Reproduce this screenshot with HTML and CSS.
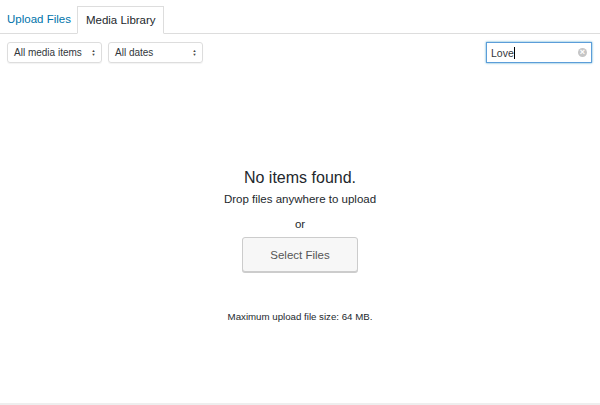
FILE: index.html
```html
<!DOCTYPE html>
<html>
<head>
<meta charset="utf-8">
<link rel="stylesheet" href="styles.css">
</head>
<body>
<div class="frame">
  <div class="tabs">
    <a class="tab link">Upload Files</a>
    <a class="tab active">Media Library</a>
  </div>
  <div class="toolbar">
    <div class="filters">
      <div class="select sel1"><span>All media items</span><span class="arrows">&#9650;&#9660;</span></div>
      <div class="select sel2"><span>All dates</span><span class="arrows">&#9650;&#9660;</span></div>
    </div>
    <div class="search"><span class="val">Love</span><span class="caret"></span><span class="clear">&#215;</span></div>
  </div>
  <div class="empty">
    <h2 class="title">No items found.</h2>
    <p class="drop">Drop files anywhere to upload</p>
    <p class="or">or</p>
    <button class="btn">Select Files</button>
    <p class="max">Maximum upload file size: 64 MB.</p>
  </div>
  <div class="bottom"></div>
</div>
</body>
</html>
```
FILE: styles.css
```css
html, body { margin: 0; padding: 0; background: #fff; }
body { font-family: "Liberation Sans", Arial, sans-serif; color: #23282d; width: 600px; height: 405px; overflow: hidden; }
.frame { display: flex; flex-direction: column; height: 405px; }
.tabs { display: flex; align-items: flex-end; height: 34px; border-bottom: 1px solid #ddd; box-sizing: border-box; }
.tab { font-size: 11.5px; height: 27px; line-height: 27px; box-sizing: border-box; }
.link { color: #0073aa; padding: 0 6px 0 7px; }
.active { border: 1px solid #ddd; border-bottom: 1px solid #fff; margin-bottom: -1px; height: 28px; background: #fff; color: #23282d; padding: 0 7px 0 8px; line-height: 27px; }
.toolbar { display: flex; justify-content: space-between; align-items: flex-start; padding: 8px 8px 0 7px; }
.filters { display: flex; gap: 6px; }
.select { height: 21px; box-sizing: border-box; border: 1px solid #ddd; border-radius: 3px; box-shadow: 0 1px 1px rgba(0,0,0,0.05); font-size: 10px; display: flex; align-items: center; justify-content: space-between; padding: 0 5px 0 6px; color: #32373c; }
.sel1 { width: 95px; }
.sel2 { width: 95px; }
.arrows { font-size: 4px; width: 5px; line-height: 4px; display: flex; flex-direction: column; color: #444; word-wrap: break-word; text-align: center; }
.search { width: 106px; height: 21px; box-sizing: border-box; border: 1px solid #5b9dd9; box-shadow: 0 0 2px rgba(30,140,190,0.8); display: flex; align-items: center; padding: 0 4px; font-size: 10.5px; color: #32373c; }
.caret { width: 1px; height: 12px; background: #000; }
.clear { margin-left: auto; width: 9px; height: 9px; border-radius: 50%; background: #c6c6c6; color: #fff; font-size: 9px; line-height: 9px; text-align: center; font-weight: bold; }
.empty { flex: 1; display: flex; flex-direction: column; align-items: center; padding-top: 105px; }
.title { margin: 0; font-size: 16px; font-weight: normal; line-height: 20px; color: #23282d; }
.drop { margin: 4px 0 0; font-size: 11.5px; line-height: 14px; color: #23282d; }
.or { margin: 11px 0 0; font-size: 11.5px; line-height: 14px; }
.btn { margin-top: 6px; width: 116px; height: 35px; border: 1px solid #ccc; border-radius: 3px; background: #f7f7f7; box-shadow: 0 1px 0 #ccc; font-family: inherit; font-size: 11.5px; color: #555; padding: 0; }
.max { margin: 39px 0 0; font-size: 9.7px; line-height: 12px; color: #23282d; }
.bottom { height: 2px; background: #eee; }
```
